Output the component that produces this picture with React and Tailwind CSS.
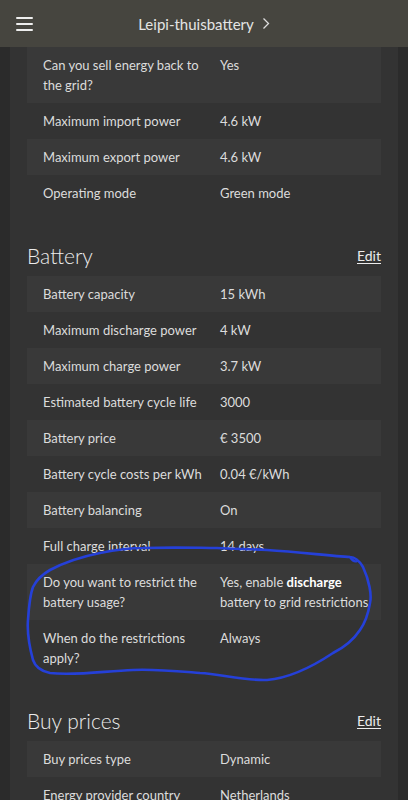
const GRID = [
  ['Can you sell energy back to the grid?', 'Yes'],
  ['Maximum import power', '4.6 kW'],
  ['Maximum export power', '4.6 kW'],
  ['Operating mode', 'Green mode'],
]

const BATTERY = [
  ['Battery capacity', '15 kWh'],
  ['Maximum discharge power', '4 kW'],
  ['Maximum charge power', '3.7 kW'],
  ['Estimated battery cycle life', '3000'],
  ['Battery price', '€ 3500'],
  ['Battery cycle costs per kWh', '0.04 €/kWh'],
  ['Battery balancing', 'On'],
  ['Full charge interval', '14 days'],
  ['Do you want to restrict the battery usage?', <>Yes, enable <b className="font-bold text-white">discharge</b> battery to grid restrictions</>],
  ['When do the restrictions apply?', 'Always'],
]

const BUY = [
  ['Buy prices type', 'Dynamic'],
  ['Energy provider country', 'Netherlands'],
]

function Rows({ rows }) {
  return (
    <div>
      {rows.map(([k, v], i) => (
        <div key={i} className={'flex py-2 pl-4 pr-2 ' + (i % 2 === 0 ? 'bg-[#393939]' : '')}>
          <div className="w-[177px] shrink-0 pr-3">{k}</div>
          <div className="flex-1">{v}</div>
        </div>
      ))}
    </div>
  )
}

function Heading({ title }) {
  return (
    <div className="flex items-center justify-between mt-[31px] mb-1.5 h-7">
      <h2 className="text-[21px] font-light text-[#ececec]">{title}</h2>
      <a className="text-[14px] underline underline-offset-2 text-[#ececec]">Edit</a>
    </div>
  )
}

export default function App() {
  return (
    <div className="relative h-[800px] overflow-hidden bg-[#2b2b2b] text-[13px] leading-5 text-[#dcdcdc]" style={{ fontFamily: 'Lato, "Open Sans", sans-serif' }}>
      <header className="h-[47px] bg-[#46453f] flex items-center relative">
        <svg width="17" height="14" viewBox="0 0 17 14" className="absolute left-[16px] top-[17px]">
          <rect x="0" y="0" width="17" height="2" rx="1" fill="#eee" />
          <rect x="0" y="6" width="17" height="2" rx="1" fill="#eee" />
          <rect x="0" y="12" width="17" height="2" rx="1" fill="#eee" />
        </svg>
        <div className="flex-1 flex justify-center items-center gap-2 text-[15px] text-[#e4e4e4]">
          <span>Leipi-thuisbattery</span>
          <svg width="8" height="13" viewBox="0 0 8 13"><path d="M1.5 1.5 L6.5 6.5 L1.5 11.5" stroke="#ddd" strokeWidth="1.3" fill="none" /></svg>
        </div>
      </header>
      <main className="mx-[10px] bg-[#333333] px-[17px] pb-10">
        <Rows rows={GRID} />
        <Heading title="Battery" />
        <Rows rows={BATTERY} />
        <Heading title="Buy prices" />
        <Rows rows={BUY} />
      </main>
      <svg className="absolute left-0 top-0 pointer-events-none" width="408" height="800" viewBox="0 0 408 800">
        <path
          d="M143 548 C180 547 200 548 217 548 C235 549 250 549 267 550 C300 552 330 556 350 557 C356 557 360 562 363 567 C369 580 372 595 370 603 C368 615 365 623 360 630 C352 642 343 648 333 653 C315 665 290 678 267 680 C245 681 220 674 200 673 C175 671 155 669 133 670 C105 671 75 676 50 673 C40 671 35 666 33 660 C29 645 27 632 28 620 C29 605 30 595 33 587 C37 579 43 574 50 570 C65 562 85 556 100 553 C115 550 130 548 143 548 Z"
          stroke="#2540d8" strokeWidth="2.6" fill="none" strokeLinecap="round" strokeLinejoin="round"
        />
        <path d="M350 557 C352 560 355 562 357 561" stroke="#2540d8" strokeWidth="2.4" fill="none" strokeLinecap="round" />
      </svg>
    </div>
  )
}
